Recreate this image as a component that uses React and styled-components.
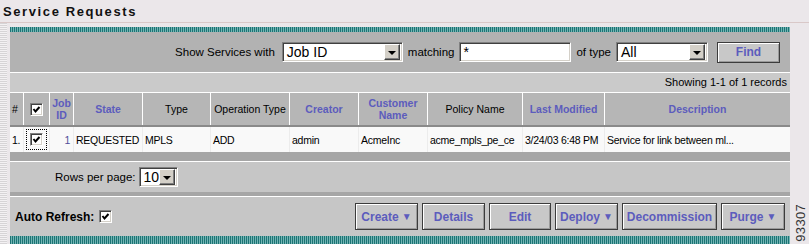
import styled, { createGlobalStyle } from "styled-components"

const GlobalStyle = createGlobalStyle`
    body {
        margin: 0;
        background: #ebe7ea;
    }
`

const BLUE = "#5c5cbd"

const Page = styled.div`
    position: relative;
    width: 809px;
    height: 244px;
    overflow: hidden;
    background: #ebe7ea;
    font-family: "Liberation Sans", Arial, sans-serif;
    font-size: 11px;
    color: #000;
`

const Title = styled.div`
    box-sizing: border-box;
    height: 23px;
    padding: 4px 0 0 3px;
    border-bottom: 1px solid #d9c8c8;
    font-size: 13px;
    font-weight: 700;
    letter-spacing: 1.6px;
    line-height: 15px;
    color: #111;
`

const Body = styled.div`
    display: flex;
`

const LeftStrip = styled.div`
    width: 7px;
    height: 221px;
    background: repeating-linear-gradient(0deg, #d6d4d6 0 1px, #f3f1f3 1px 2px);
`

const Panel = styled.div`
    width: 780px;
    margin: 4px 0 0 3px;
    display: flex;
    flex-direction: column;
`

const Teal = styled.div`
    height: ${p => p.$h}px;
    flex-shrink: 0;
    background: repeating-linear-gradient(90deg, #1c7474 0 1px, #74b4b4 1px 2px);
`

const FilterBar = styled.div`
    height: 40px;
    border-bottom: 1px solid #fff;
    background: #b2b2b2;
    display: flex;
    align-items: center;
    justify-content: flex-end;
    gap: 5px;
    padding-right: 10px;
    font-size: 11.5px;
`

const Label = styled.span`
    margin-left: ${p => p.$ml || 0}px;
`

const SelectBox = styled.div`
    box-sizing: border-box;
    width: ${p => p.$w}px;
    height: 20px;
    background: #fff;
    border: 1px solid;
    border-color: #808080 #fff #fff #808080;
    box-shadow: inset 1px 1px #404040, inset -1px -1px #d4d0c8;
    display: flex;
    align-items: center;
    justify-content: space-between;
    padding: 0 2px 0 4px;
    font-size: 14px;
    line-height: 16px;
`

const ArrowBtn = styled.div`
    box-sizing: border-box;
    width: 16px;
    height: 16px;
    background: #d4d0c8;
    border: 1px solid;
    border-color: #fff #404040 #404040 #fff;
    box-shadow: inset -1px -1px #808080;
    display: flex;
    align-items: center;
    justify-content: center;

    &::after {
        content: "";
        border-left: 4px solid transparent;
        border-right: 4px solid transparent;
        border-top: 4px solid #000;
        margin-top: 1px;
    }
`

const TextInput = styled(SelectBox)`
    padding-left: 3px;
    justify-content: flex-start;
`

const Button = styled.div`
    box-sizing: border-box;
    width: ${p => p.$w}px;
    height: ${p => p.$h || 27}px;
    background: #c8c8c8;
    border: 1px solid #3c3c3c;
    box-shadow: inset 1px 1px #fff, inset -1px -1px #9a9a9a;
    color: ${BLUE};
    font-weight: 700;
    font-size: 12px;
    display: flex;
    align-items: center;
    justify-content: center;
    margin-left: ${p => p.$ml || 0}px;
`

const Caret = styled.span`
    font-size: 10px;
    margin-left: 3px;
`

const InfoBar = styled.div`
    height: 19px;
    line-height: 19px;
    background: #cacaca;
    text-align: right;
    padding-right: 3px;
    font-size: 11px;
`

const cols = "13px 26px 24px 69px 68px 79px 69px 69px 95px 82px 186px"

const HeadRow = styled.div`
    display: grid;
    grid-template-columns: ${cols};
    height: 32px;
    border-top: 1px solid #fff;
    border-bottom: 2px solid #8a8a8a;
    background: #b6b6b6;
`

const HeadCell = styled.div`
    display: flex;
    align-items: center;
    justify-content: ${p => (p.$left ? "flex-start" : "center")};
    text-align: center;
    padding-left: ${p => (p.$left ? 2 : 0)}px;
    border-left: ${p => (p.$first ? "none" : "1px solid #fff")};
    font-size: 10.5px;
    line-height: 12px;
    white-space: ${p => (p.$link ? "normal" : "nowrap")};
    font-weight: ${p => (p.$link ? 700 : 400)};
    color: ${p => (p.$link ? BLUE : "#000")};
`

const DataRow = styled.div`
    display: grid;
    grid-template-columns: ${cols};
    height: 25px;
    background: #f9f9f9;
`

const DataCell = styled.div`
    display: flex;
    align-items: center;
    justify-content: ${p => (p.$right ? "flex-end" : p.$center ? "center" : "flex-start")};
    padding: 0 ${p => (p.$right ? 3 : 0)}px 0 ${p => (p.$right || p.$center ? 0 : 2)}px;
    border-left: ${p => (p.$first ? "none" : "1px solid #ececec")};
    white-space: nowrap;
    overflow: hidden;
    font-size: 10.5px;
    letter-spacing: -0.25px;
    color: ${p => p.$color || "#000"};
`

const Focus = styled.div`
    padding: 3px;
    border: 1px dotted #000;
    display: flex;
`

const Band = styled.div`
    height: ${p => p.$h}px;
    background: #a6a6a6;
    border-bottom: 1px solid #fff;
`

const RowsBar = styled.div`
    height: 30px;
    background: #c6c6c6;
    display: flex;
    align-items: center;
    padding-left: 45px;
    gap: 3px;
    font-size: 11.5px;
`

const BottomBar = styled.div`
    height: 39px;
    background: #c6c6c6;
    display: flex;
    align-items: center;
    padding: 0 5px 0 5px;
`

const AutoLabel = styled.span`
    font-weight: 700;
    font-size: 12px;
    margin-right: 5px;
`

const Buttons = styled.div`
    margin-left: auto;
    display: flex;
    gap: 4px;
`

const Box = styled.div`
    box-sizing: border-box;
    width: 13px;
    height: 13px;
    background: #fff;
    border: 1px solid;
    border-color: #808080 #fff #fff #808080;
    box-shadow: inset 1px 1px #404040, inset -1px -1px #d4d0c8;
    display: flex;
    align-items: center;
    justify-content: center;
`

const FigNum = styled.div`
    position: absolute;
    right: 1px;
    bottom: 2px;
    writing-mode: vertical-rl;
    transform: rotate(180deg);
    font-size: 13px;
    letter-spacing: 0.3px;
    color: #333;
`

const Check = () => (
    <Box>
        <svg width="9" height="9" viewBox="0 0 9 9">
            <polyline points="1.5,4 3.5,6.5 7.5,2" fill="none" stroke="#000" strokeWidth="2" />
        </svg>
    </Box>
)

const Select = ({ w, value }) => (
    <SelectBox $w={w}>
        <span>{value}</span>
        <ArrowBtn />
    </SelectBox>
)

const headers = [
    { t: "#", left: true },
    { t: "check" },
    { t: "Job ID", link: true },
    { t: "State", link: true },
    { t: "Type" },
    { t: "Operation Type" },
    { t: "Creator", link: true },
    { t: "Customer Name", link: true },
    { t: "Policy Name" },
    { t: "Last Modified", link: true },
    { t: "Description", link: true },
]

const row = ["REQUESTED", "MPLS", "ADD", "admin", "AcmeInc", "acme_mpls_pe_ce", "3/24/03 6:48 PM", "Service for link between ml..."]

const actions = [
    { t: "Create", w: 63, menu: true },
    { t: "Details", w: 63 },
    { t: "Edit", w: 62 },
    { t: "Deploy", w: 63, menu: true },
    { t: "Decommission", w: 95 },
    { t: "Purge", w: 64, menu: true },
]

export default function App() {
    return (
        <Page>
            <GlobalStyle />
            <Title>Service Requests</Title>
            <Body>
                <LeftStrip />
                <Panel>
                    <Teal $h={5} />
                    <FilterBar>
                        <Label>Show Services with</Label>
                        <Label $ml={2}><Select w={121} value="Job ID" /></Label>
                        <Label>matching</Label>
                        <TextInput $w={112}>*</TextInput>
                        <Label>of type</Label>
                        <Select w={92} value="All" />
                        <Button $w={63} $h={21} $ml={4}>Find</Button>
                    </FilterBar>
                    <InfoBar>Showing 1-1 of 1 records</InfoBar>
                    <HeadRow>
                        {headers.map((h, i) => (
                            <HeadCell key={i} $first={i === 0} $left={h.left} $link={h.link}>
                                {h.t === "check" ? <Check /> : h.t}
                            </HeadCell>
                        ))}
                    </HeadRow>
                    <DataRow>
                        <DataCell $first>1.</DataCell>
                        <DataCell $center>
                            <Focus><Check /></Focus>
                        </DataCell>
                        <DataCell $right $color="#4f4f9a">1</DataCell>
                        {row.map((c, i) => (
                            <DataCell key={i}>{c}</DataCell>
                        ))}
                    </DataRow>
                    <Band $h={9} />
                    <RowsBar>
                        <span>Rows per page:</span>
                        <Select w={39} value="10" />
                    </RowsBar>
                    <Band $h={4} />
                    <BottomBar>
                        <AutoLabel>Auto Refresh:</AutoLabel>
                        <Check />
                        <Buttons>
                            {actions.map(a => (
                                <Button key={a.t} $w={a.w}>
                                    {a.t}
                                    {a.menu && <Caret>▼</Caret>}
                                </Button>
                            ))}
                        </Buttons>
                    </BottomBar>
                    <Teal $h={8} />
                </Panel>
            </Body>
            <FigNum>93307</FigNum>
        </Page>
    )
}
